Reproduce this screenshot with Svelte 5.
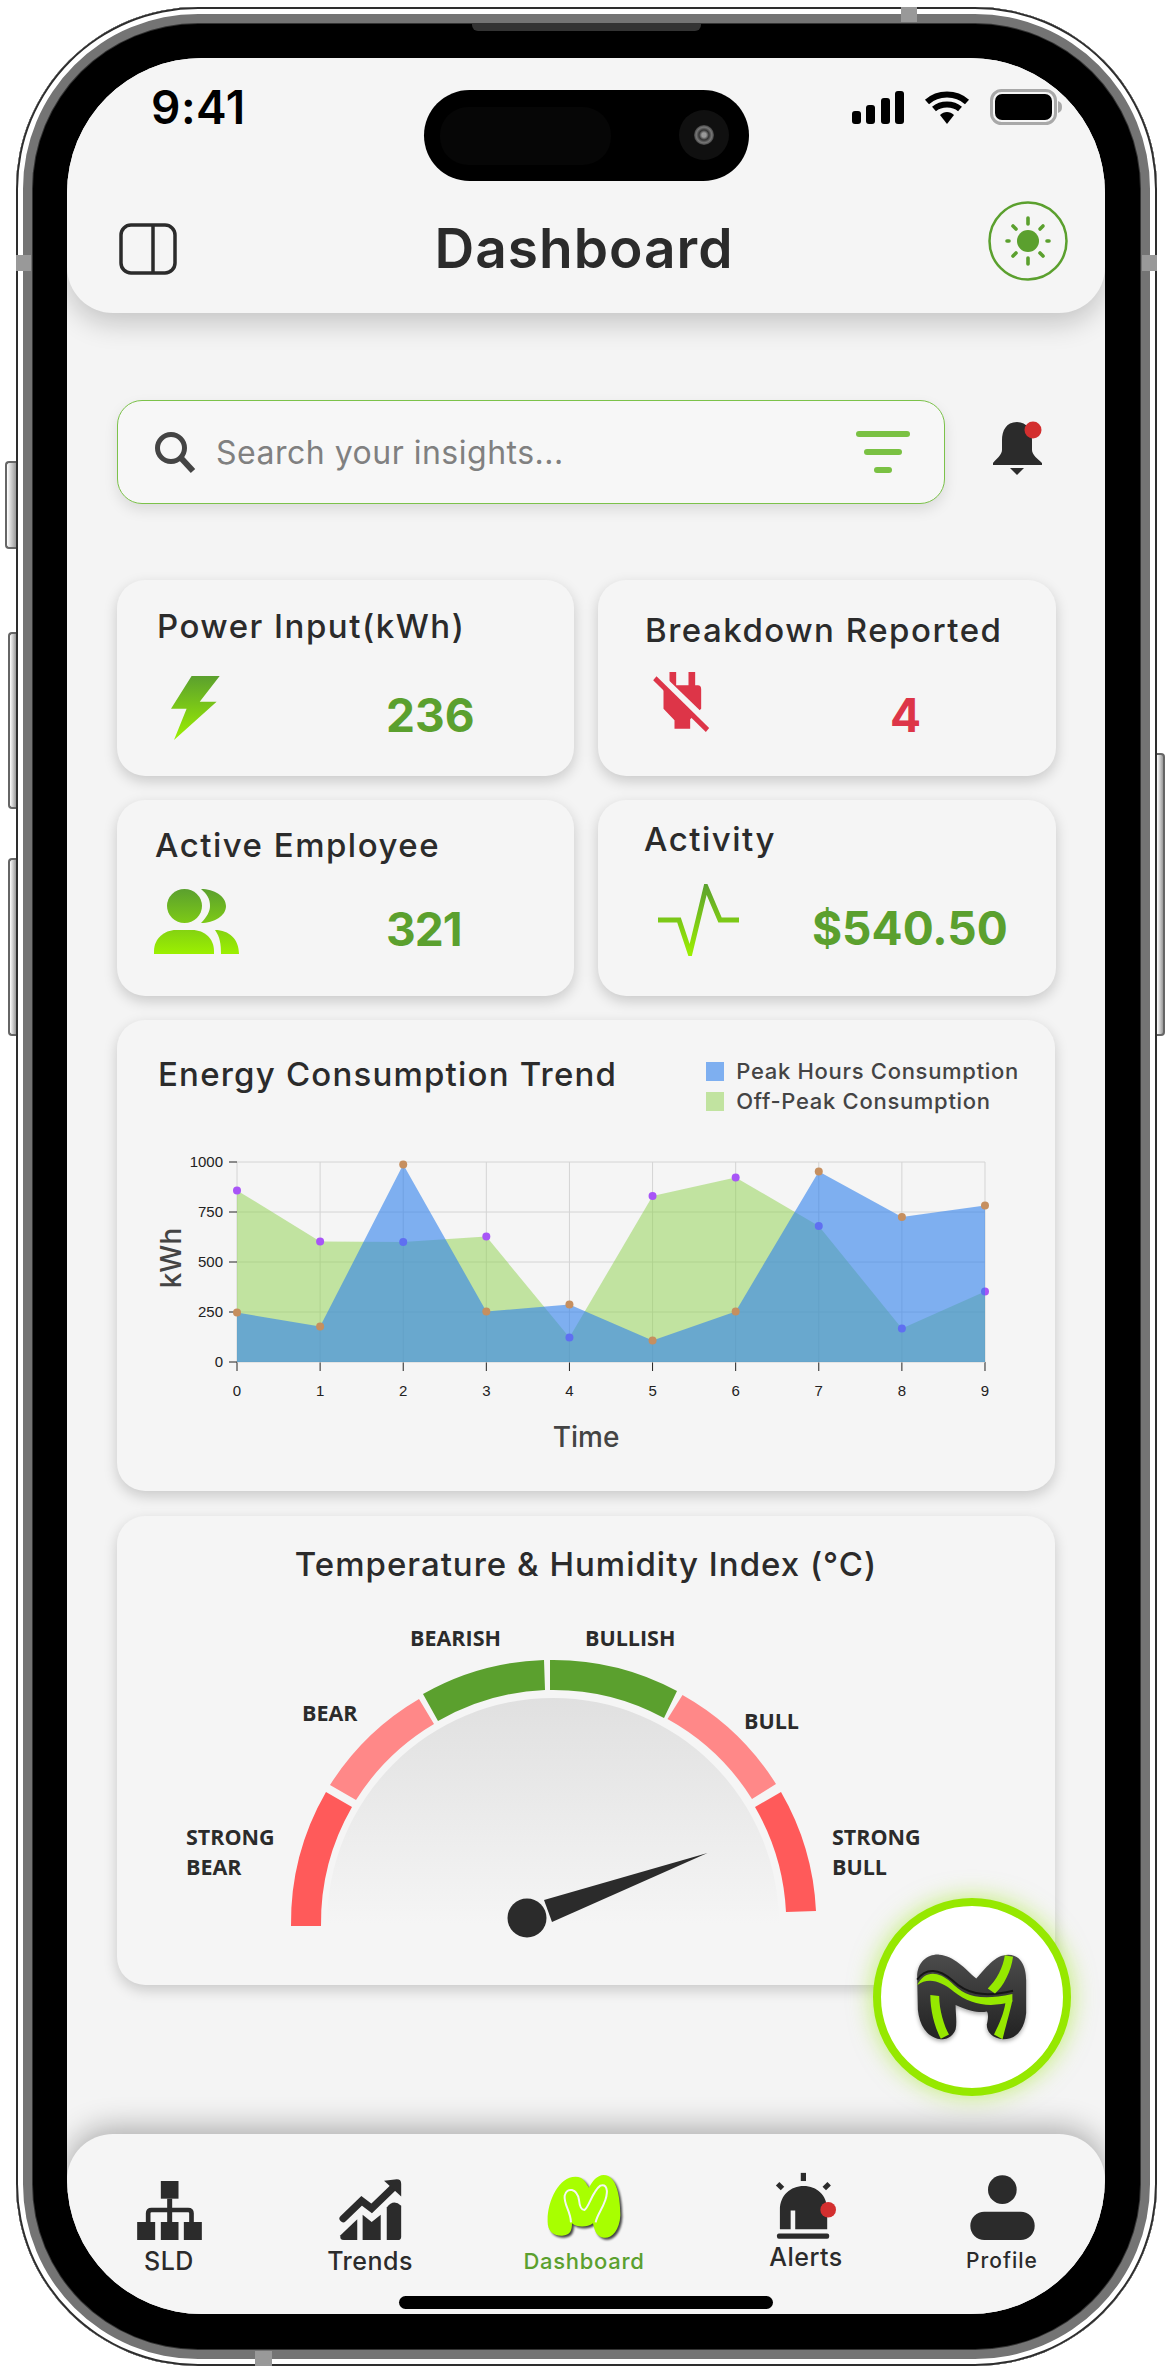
<script>
  const xAt = (i) => 236 + i * 83.11;
  const yAt = (v) => 1362 - v * 0.2;

  const offPeak = [858, 603, 600, 627, 122, 830, 923, 680, 167, 353];
  const peak = [247, 177, 987, 253, 287, 108, 253, 953, 725, 783];
  const ticksY = [0, 250, 500, 750, 1000];
  const ticksX = [0, 1, 2, 3, 4, 5, 6, 7, 8, 9];

  const area = (list) =>
    `M236,1362 ` + list.map((v, i) => `L${xAt(i)},${yAt(v)}`).join(' ') + ` L${xAt(9)},1362 Z`;

  const segments = [
    { d: 'M291,1927 A262,262 0 0 1 326,1793 L352,1808 A232,232 0 0 0 321,1927 Z', fill: '#ff5a5a' },
    { d: 'M330,1786 A262,262 0 0 1 419,1700 L434,1725 A232,232 0 0 0 356,1801 Z', fill: '#ff8888' },
    { d: 'M423,1695 A262,262 0 0 1 544,1661 L545,1691 A232,232 0 0 0 438,1722 Z', fill: '#5ba02e' },
    { d: 'M550,1661 A262,262 0 0 1 677,1692 L664,1719 A232,232 0 0 0 550,1691 Z', fill: '#5ba02e' },
    { d: 'M682.5,1696 A262,262 0 0 1 776,1785 L752,1800 A232,232 0 0 0 667.5,1720 Z', fill: '#ff8888' },
    { d: 'M781,1793 A262,262 0 0 1 816,1912 L786,1913 A232,232 0 0 0 755,1808 Z', fill: '#ff5a5a' }
  ];

  const gaugeLabels = [
    { text: 'BEARISH', x: 410, y: 1647 },
    { text: 'BULLISH', x: 585, y: 1647 },
    { text: 'BEAR', x: 302, y: 1722 },
    { text: 'BULL', x: 744, y: 1730 },
    { text: 'STRONG', x: 186, y: 1846 },
    { text: 'BEAR', x: 186, y: 1876 },
    { text: 'STRONG', x: 832, y: 1846 },
    { text: 'BULL', x: 832, y: 1876 }
  ];
</script>

<div class="page">
  <div class="phone">
    <span class="side-btn mute"></span>
    <span class="side-btn vol-up"></span>
    <span class="side-btn vol-down"></span>
    <span class="side-btn power"></span>
    <span class="speaker"></span>
    <span class="band band-top"></span>
    <span class="band band-bottom"></span>
    <span class="band band-left"></span>
    <span class="band band-right"></span>

    <div class="screen">
      <div class="island">
        <span class="island-pill"></span>
        <span class="camera"><span class="lens"></span></span>
      </div>

      <header class="header">
        <div class="status">
          <span class="time">9:41</span>
          <div class="status-icons">
            <svg width="52" height="33" viewBox="0 0 52 33">
              <rect x="0" y="20" width="9" height="13" rx="3" />
              <rect x="14" y="14" width="9" height="19" rx="3" />
              <rect x="29" y="7" width="9" height="26" rx="3" />
              <rect x="43" y="0" width="9" height="33" rx="3" />
            </svg>
            <svg class="wifi" width="46" height="33" viewBox="0 0 46 33">
              <path d="M3,11 C14,1 32,1 43,11" fill="none" stroke="#000" stroke-width="6" />
              <path d="M10,18 C17,12 29,12 36,18" fill="none" stroke="#000" stroke-width="6" />
              <path d="M16,24 C20,20 26,20 30,24 L23,33 Z" />
            </svg>
            <svg class="battery" width="72" height="36" viewBox="0 0 72 36">
              <rect x="1.5" y="1.5" width="64" height="33" rx="10" fill="none" stroke="#a8a8a8" stroke-width="3" />
              <rect x="5" y="5" width="57" height="26" rx="7" />
              <path d="M68,12 C71,13 72,15 72,18 C72,21 71,23 68,24 Z" fill="#a8a8a8" />
            </svg>
          </div>
        </div>

        <div class="toolbar">
          <svg class="panel-icon" width="58" height="52" viewBox="0 0 58 52">
            <rect x="2" y="2" width="54" height="48" rx="10" fill="none" stroke="#2b2b2b" stroke-width="3.5" />
            <line x1="34" y1="2" x2="34" y2="50" stroke="#2b2b2b" stroke-width="3.5" />
          </svg>
          <h1>Dashboard</h1>
          <div class="theme">
            <svg width="80" height="80" viewBox="0 0 80 80">
              <circle cx="40" cy="40" r="38.5" fill="none" stroke="#5ba02e" stroke-width="2.5" />
              <circle cx="40" cy="40" r="11" fill="#5ba02e" />
              <g stroke="#5ba02e" stroke-width="3.6" stroke-linecap="round">
                <line x1="40" y1="17" x2="40" y2="23" />
                <line x1="40" y1="57" x2="40" y2="63" />
                <line x1="19" y1="40" x2="21" y2="40" />
                <line x1="59" y1="40" x2="61" y2="40" />
                <line x1="25" y1="25" x2="28" y2="28" />
                <line x1="55" y1="25" x2="52" y2="28" />
                <line x1="25" y1="55" x2="28" y2="52" />
                <line x1="55" y1="55" x2="52" y2="52" />
              </g>
            </svg>
          </div>
        </div>
      </header>

      <main class="main">
        <div class="search-row">
          <div class="search">
            <svg width="42" height="44" viewBox="0 0 42 44">
              <circle cx="17" cy="18" r="13.5" fill="none" stroke="#444" stroke-width="5" />
              <line x1="27" y1="28" x2="39" y2="41" stroke="#444" stroke-width="6" />
            </svg>
            <span class="placeholder">Search your insights...</span>
            <span class="filter"><i class="f1"></i><i class="f2"></i><i class="f3"></i></span>
          </div>
          <svg class="bell" width="49" height="53" viewBox="0 0 49 53">
            <path d="M24,0 C13,0 9,9 9,18 V28 C9,33 3,37 0,41 V43 H49 V41 C45,37 39,33 39,28 V18 C39,9 34,0 24,0 Z" fill="#2b2b2b" />
            <path d="M17,46 H31 L24,53 Z" fill="#2b2b2b" />
            <circle cx="40" cy="8" r="8.5" fill="#d32f2f" />
          </svg>
        </div>

        <section class="stats">
          <div class="card stat">
            <h3 class="t-power">Power Input(kWh)</h3>
            <svg class="i-bolt" width="49" height="64" viewBox="0 0 49 64">
              <defs>
                <linearGradient id="brandV" x1="0" y1="0" x2="0" y2="1">
                  <stop offset="0" stop-color="#5ba02e" />
                  <stop offset="1" stop-color="#9cf000" />
                </linearGradient>
              </defs>
              <path d="M20.6,0 L48.7,0 L28.7,25.7 L45.6,25.7 L3,64 L15.6,32.7 L0,32.7 Z" fill="url(#brandV)" />
            </svg>
            <strong class="v-power">236</strong>
          </div>

          <div class="card stat">
            <h3 class="t-break">Breakdown Reported</h3>
            <svg class="i-plug" width="57" height="60" viewBox="36 20 170 180">
              <path d="M85,20 H105 V60 H142 V20 H162 V60 H170 Q180,60 180,72 V130 L147,162 V190 H100 V165 L67,130 V60 H85 Z" fill="#dd3548" />
              <line x1="72" y1="50" x2="186" y2="160" stroke="#f5f5f5" stroke-width="22" />
              <path d="M36,45 L46,33 L204,188 L194,200 Z" fill="#dd3548" />
            </svg>
            <strong class="v-break">4</strong>
          </div>

          <div class="card stat">
            <h3 class="t-active">Active Employee</h3>
            <svg class="i-people" width="85" height="65" viewBox="0 0 85 65">
              <defs>
                <linearGradient id="brandP" gradientUnits="userSpaceOnUse" x1="0" y1="0" x2="0" y2="65">
                  <stop offset="0" stop-color="#5ba02e" />
                  <stop offset="1" stop-color="#9cf000" />
                </linearGradient>
              </defs>
              <ellipse cx="30.5" cy="17" rx="17.5" ry="17" fill="url(#brandP)" />
              <path d="M47,0 C60,0 72,7 72,17 C72,27 60,34 47,34 C53,28 56,22 56,17 C56,10 53,5 47,0 Z" fill="url(#brandP)" />
              <path d="M0,65 V62 C0,50 10,41 22,41 H38 C51,41 60,50 60,62 V65 Z" fill="url(#brandP)" />
              <path d="M61,41 C75,41 85,50 85,65 H67 C67,55 66,48 61,41 Z" fill="url(#brandP)" />
            </svg>
            <strong class="v-active">321</strong>
          </div>

          <div class="card stat">
            <h3 class="t-activity">Activity</h3>
            <svg class="i-pulse" width="81" height="72" viewBox="0 0 81 72">
              <defs>
                <linearGradient id="brandL" gradientUnits="userSpaceOnUse" x1="0" y1="0" x2="0" y2="72">
                  <stop offset="0" stop-color="#5ba02e" />
                  <stop offset="1" stop-color="#9cf000" />
                </linearGradient>
              </defs>
              <path d="M0,36 H21 L32,69 L48,3 L62,36 H81" fill="none" stroke="url(#brandL)" stroke-width="5" />
            </svg>
            <strong class="v-activity">$540.50</strong>
          </div>
        </section>

        <section class="card trend">
          <div class="trend-head">
            <h3>Energy Consumption Trend</h3>
            <ul class="legend">
              <li><i class="sw-peak"></i>Peak Hours Consumption</li>
              <li><i class="sw-off"></i>Off-Peak Consumption</li>
            </ul>
          </div>
          <svg class="plot" width="860" height="310" viewBox="150 1150 860 310">
            {#each ticksX as t}
              <line x1={xAt(t)} x2={xAt(t)} y1="1162" y2="1362" stroke="#d4d4d4" />
              <line x1={xAt(t)} x2={xAt(t)} y1="1362" y2="1371" stroke="#222" />
              <text class="tick" x={xAt(t)} y="1396" text-anchor="middle">{t}</text>
            {/each}
            {#each ticksY as t}
              <line x1="236" x2="984" y1={yAt(t)} y2={yAt(t)} stroke="#d4d4d4" />
              <line x1="228" x2="236" y1={yAt(t)} y2={yAt(t)} stroke="#222" />
              <text class="tick" x="222" y={yAt(t) + 5} text-anchor="end">{t}</text>
            {/each}

            <path d={area(offPeak)} fill="#8dd14b" fill-opacity="0.5" />
            {#each offPeak as v, i}
              <circle cx={xAt(i)} cy={yAt(v)} r="4" fill="#a855f7" />
            {/each}
            <path d={area(peak)} fill="#2f80ed" fill-opacity="0.6" />
            {#each peak as v, i}
              <circle cx={xAt(i)} cy={yAt(v)} r="4" fill="#c68f5f" />
            {/each}

            <text class="axis" x="585" y="1447" text-anchor="middle">Time</text>
            <text class="axis" x="0" y="0" text-anchor="middle" transform="translate(180,1258) rotate(-90)">kWh</text>
          </svg>
        </section>

        <section class="card gauge">
          <h3>Temperature &amp; Humidity Index (°C)</h3>
          <svg class="dial" width="770" height="330" viewBox="170 1620 770 330">
            <defs>
              <linearGradient id="disk" x1="0" y1="0" x2="0" y2="1">
                <stop offset="0" stop-color="#e0e0e0" />
                <stop offset="1" stop-color="#f5f5f5" />
              </linearGradient>
            </defs>
            <path d="M327,1925 A226,226 0 0 1 779,1925 Z" fill="url(#disk)" />
            {#each segments as s}
              <path d={s.d} fill={s.fill} />
            {/each}
            {#each gaugeLabels as l}
              <text class="g-label" x={l.x} y={l.y}>{l.text}</text>
            {/each}
            <path d="M707.5,1854 L544,1901 L552,1923 Z" fill="#2b2b2b" />
            <circle cx="527" cy="1919" r="19.5" fill="#2b2b2b" />
          </svg>
        </section>
      </main>

      <button class="fab" aria-label="Assistant">
        <svg width="112" height="87" viewBox="225 250 340 265">
          <defs>
            <linearGradient id="logoDark" x1="0" y1="0" x2="0" y2="1">
              <stop offset="0" stop-color="#4c4c4c" />
              <stop offset="1" stop-color="#222" />
            </linearGradient>
          </defs>
          <path d="M300,510 C260,505 235,470 230,420 L228,320 C228,275 260,250 295,252 C340,255 375,295 408,325 C435,295 465,252 505,252 C545,252 560,290 560,330 L560,430 C555,480 530,510 490,510 C460,508 440,490 440,465 C445,445 445,430 440,425 C420,430 390,425 345,405 C345,430 350,460 345,480 C335,505 315,510 300,510 Z" fill="url(#logoDark)" />
          <path d="M228,328 C255,290 295,295 335,330 C375,368 425,385 520,362" fill="none" stroke="#161616" stroke-width="6" />
          <path d="M228,345 C250,300 290,300 330,335 C370,375 410,395 518,372 L518,395 C450,415 390,405 340,365 C300,330 260,320 228,345 Z" fill="#96e800" />
          <path d="M268,375 L295,378 C295,420 310,470 325,495 L300,508 C280,470 268,420 268,375 Z" fill="#96e800" />
          <path d="M495,254 L520,258 C515,300 490,350 465,370 L443,355 C470,330 490,290 495,254 Z" fill="#96e800" />
          <path d="M518,392 C510,430 495,480 488,510 L462,495 C480,460 492,430 497,398 Z" fill="#96e800" />
        </svg>
      </button>

      <nav class="nav">
        <div class="nav-grid">
          <div class="nav-item">
            <div class="nav-icon">
              <svg width="65" height="59" viewBox="22 45 194 177">
                <rect x="93" y="45" width="53" height="53" />
                <rect x="112" y="98" width="15" height="72" />
                <path d="M55,170 V142 Q55,132 65,132 H175 Q185,132 185,142 V170" fill="none" stroke="#2b2b2b" stroke-width="14" />
                <rect x="22" y="168" width="54" height="54" />
                <rect x="93" y="168" width="53" height="54" />
                <rect x="162" y="168" width="54" height="54" />
              </svg>
            </div>
            <span class="lbl lbl-sld">SLD</span>
          </div>
          <div class="nav-item">
            <div class="nav-icon">
              <svg width="63" height="61" viewBox="628 40 187 182">
                <path d="M640,158 L695,105 L725,128 L790,65" fill="none" stroke="#2b2b2b" stroke-width="22" stroke-linecap="round" />
                <path d="M762,45 L800,41 Q813,41 813,54 L813,92 Z" />
                <path d="M632,208 L682,160 V222 H642 Q628,222 632,208 Z" />
                <path d="M698,222 V147 L725,168 L752,147 V222 Z" />
                <path d="M770,222 V125 Q790,98 813,120 V212 Q813,222 803,222 Z" />
              </svg>
            </div>
            <span class="lbl lbl-trends">Trends</span>
          </div>
          <div class="nav-item">
            <div class="nav-icon">
              <svg class="m-icon" width="74" height="65" viewBox="80 30 222 195">
                <path d="M82,170 C80,110 115,35 165,35 C190,35 197,55 206,68 C215,50 230,30 250,30 C290,30 300,100 300,150 C298,200 270,222 250,218 C225,215 222,190 218,175 C200,188 170,188 155,175 C155,195 150,212 125,212 C95,212 82,195 82,170 Z" fill="#a8ff00" />
                <path d="M152,172 C150,135 130,120 133,92 C140,65 170,70 176,105 C178,125 185,135 192,135 C205,130 215,80 240,62 C258,55 265,75 255,105 C245,135 230,150 226,172" fill="none" stroke="#f5f5f5" stroke-width="6" />
              </svg>
            </div>
            <span class="lbl lbl-dash">Dashboard</span>
          </div>
          <div class="nav-item">
            <div class="nav-icon">
              <svg width="62" height="68" viewBox="52 22 190 203">
                <path fill-rule="evenodd" d="M67,195 V135 C67,90 100,62 140,62 C180,62 212,90 212,135 V195 H114 V137 H100 V195 Z" />
                <rect x="58" y="208" width="160" height="16" rx="6" />
                <rect x="131" y="22" width="16" height="25" />
                <path d="M60,55 L75,70" stroke="#2b2b2b" stroke-width="15" />
                <path d="M218,55 L203,70" stroke="#2b2b2b" stroke-width="15" />
                <circle cx="215" cy="135" r="24" fill="#d32f2f" />
              </svg>
            </div>
            <span class="lbl lbl-alerts">Alerts</span>
          </div>
          <div class="nav-item">
            <div class="nav-icon">
              <svg width="65" height="65" viewBox="627 28 193 195">
                <circle cx="723" cy="72" r="43" />
                <rect x="627" y="138" width="193" height="85" rx="42" />
              </svg>
            </div>
            <span class="lbl lbl-profile">Profile</span>
          </div>
        </div>
        <span class="home"></span>
      </nav>
    </div>
  </div>
</div>

<style>
  :global(body) {
    margin: 0;
    background: #fff;
  }

  .page {
    width: 1171px;
    height: 2372px;
    padding: 7px 14px 6px 16px;
    box-sizing: border-box;
    font-family: Inter, "Noto Sans", sans-serif;
    color: #2b2b2b;
  }

  .phone {
    position: relative;
    height: 100%;
    box-sizing: border-box;
    padding: 51px 52px 52px 51px;
    border-radius: 182px;
    background: #000;
    box-shadow:
      inset 0 0 0 2px #2e2e2e,
      inset 0 0 0 7px #fff,
      inset 0 0 0 16px #747474,
      inset 0 0 0 17px #333;
  }

  .side-btn {
    position: absolute;
    border: 2px solid #666;
    border-right: 0;
    background: linear-gradient(90deg, #fff, #999);
    border-radius: 4px 0 0 4px;
    box-sizing: border-box;
  }
  .mute { left: -11px; top: 454px; width: 11px; height: 88px; }
  .vol-up { left: -8px; top: 625px; width: 8px; height: 177px; }
  .vol-down { left: -8px; top: 851px; width: 8px; height: 178px; }
  .power {
    right: -8px;
    top: 746px;
    width: 8px;
    height: 283px;
    border: 2px solid #666;
    border-left: 0;
    border-radius: 0 4px 4px 0;
  }
  .speaker {
    position: absolute;
    top: 16px;
    left: 456px;
    width: 229px;
    height: 8px;
    background: #333;
    border-radius: 0 0 6px 6px;
  }
  .band {
    position: absolute;
    background: #999;
  }
  .band-top { top: 0; left: 885px; width: 16px; height: 15px; }
  .band-bottom { bottom: 0; left: 239px; width: 17px; height: 15px; }
  .band-left { left: 0; top: 248px; width: 15px; height: 16px; }
  .band-right { right: 0; top: 248px; width: 15px; height: 16px; }

  .screen {
    position: relative;
    height: 100%;
    display: flex;
    flex-direction: column;
    overflow: hidden;
    border-radius: 135px;
    background: #f4f4f4;
  }

  .island {
    position: absolute;
    z-index: 3;
    left: 357px;
    top: 32px;
    width: 325px;
    height: 91px;
    border-radius: 46px;
    background: #000;
  }
  .island-pill {
    position: absolute;
    left: 16px;
    top: 17px;
    width: 171px;
    height: 58px;
    border-radius: 28px;
    background: #060606;
  }
  .camera {
    position: absolute;
    left: 255px;
    top: 20px;
    width: 50px;
    height: 50px;
    border-radius: 50%;
    background: #101010;
    display: flex;
    align-items: center;
    justify-content: center;
  }
  .lens {
    width: 20px;
    height: 20px;
    border-radius: 50%;
    background: radial-gradient(circle, #999 0 15%, #333 35%, #777 55%, #222 80%);
  }

  .header {
    position: relative;
    z-index: 2;
    height: 255px;
    flex: none;
    box-sizing: border-box;
    border-radius: 0 0 46px 46px;
    background: #f5f5f5;
    box-shadow: 0 10px 28px rgba(0, 0, 0, 0.2);
  }
  .status {
    display: flex;
    justify-content: space-between;
    align-items: center;
    height: 46px;
    padding: 26px 43px 0 84px;
  }
  .time {
    font-size: 46px;
    font-weight: 600;
    color: #000;
    letter-spacing: 0.5px;
  }
  .status-icons {
    display: flex;
    align-items: center;
    gap: 20px;
  }
  .toolbar {
    display: grid;
    grid-template-columns: 1fr auto 1fr;
    align-items: center;
    padding: 71px 52px 0 52px;
  }
  .panel-icon {
    display: block;
    margin-top: 16px;
  }
  .toolbar h1 {
    margin: 14px 4px 0 0;
    font-size: 55px;
    line-height: 60px;
    font-weight: 600;
    letter-spacing: 1px;
  }
  .theme {
    justify-self: end;
    display: flex;
    margin-right: -15px;
  }

  .main {
    flex: 1;
    padding: 87px 50px 0;
    min-height: 0;
  }

  .search-row {
    display: flex;
    align-items: flex-start;
  }
  .search {
    width: 828px;
    height: 104px;
    box-sizing: border-box;
    display: flex;
    align-items: center;
    padding: 0 34px 0 36px;
    border: 1.5px solid #7cc24a;
    border-radius: 25px;
    background: #f7f7f7;
    box-shadow: 0 6px 14px rgba(0, 0, 0, 0.1);
  }
  .placeholder {
    margin-left: 20px;
    font-size: 32px;
    letter-spacing: 0.5px;
    color: #808080;
  }
  .filter {
    margin-left: auto;
    display: flex;
    flex-direction: column;
    align-items: center;
    gap: 12px;
  }
  .filter i {
    display: block;
    height: 6px;
    border-radius: 3px;
    background: #7ac143;
  }
  .f1 { width: 54px; }
  .f2 { width: 38px; }
  .f3 { width: 18px; }
  .bell {
    margin: 22px 0 0 48px;
    overflow: visible;
  }

  .card {
    border-radius: 28px;
    background: #f5f5f5;
    box-shadow: 0 5px 14px rgba(0, 0, 0, 0.18);
  }
  .stats {
    display: grid;
    grid-template-columns: 457px 458px;
    grid-auto-rows: 196px;
    gap: 24px;
    margin-top: 76px;
  }
  .stat {
    position: relative;
  }
  /* stat contents sit at their own spots, the four cards in the source differ */
  .stat h3,
  .stat svg,
  .stat strong {
    position: absolute;
    margin: 0;
  }
  .stat h3 {
    font-size: 33px;
    line-height: 36px;
    font-weight: 500;
    letter-spacing: 1.5px;
    white-space: nowrap;
  }
  .stat strong {
    font-size: 46px;
    line-height: 54px;
    font-weight: 700;
    color: #5ba02e;
  }
  .t-power { left: 40px; top: 28px; }
  .t-break { left: 47px; top: 32px; }
  .t-active { left: 38px; top: 27px; letter-spacing: 1.1px; }
  .t-activity { left: 46px; top: 21px; letter-spacing: 2.2px; }
  .i-bolt { left: 54px; top: 96px; }
  .i-plug { left: 55px; top: 92px; }
  .i-people { left: 37px; top: 89px; }
  .i-pulse { left: 60px; top: 84px; }
  .v-power { left: 269px; top: 108px; }
  .v-break { left: 292px; top: 108px; color: #dd3548 !important; }
  .v-active { left: 269px; top: 102px; letter-spacing: -1px; }
  .v-activity { left: 214px; top: 101px; }

  .trend {
    margin-top: 24px;
    height: 471px;
    box-sizing: border-box;
    padding: 36px 0 0 41px;
  }
  .trend-head {
    display: flex;
    align-items: flex-start;
    height: 56px;
    padding-right: 36px;
  }
  .trend-head h3 {
    margin: 0;
    font-size: 33px;
    line-height: 36px;
    font-weight: 500;
    letter-spacing: 1.2px;
    white-space: nowrap;
  }
  .legend {
    list-style: none;
    margin: 0 0 0 auto;
    padding: 0;
    font-size: 22px;
    font-weight: 500;
    letter-spacing: 0.7px;
    color: #444;
  }
  .legend li {
    display: flex;
    align-items: center;
    height: 30px;
    white-space: nowrap;
  }
  .legend i {
    width: 18px;
    height: 19px;
    margin-right: 12px;
  }
  .sw-peak { background: #7eaff0; }
  .sw-off { background: #c1e3a0; }
  .plot {
    display: block;
    margin: 38px 0 0 -7px;
  }
  .tick {
    font-family: "Liberation Sans", sans-serif;
    font-size: 15px;
    fill: #222;
  }
  .axis {
    font-size: 28px;
    font-weight: 500;
    fill: #444;
  }

  .gauge {
    margin-top: 25px;
    height: 469px;
    box-sizing: border-box;
    padding-top: 28px;
  }
  .gauge h3 {
    margin: 0;
    text-align: center;
    font-size: 33px;
    line-height: 40px;
    font-weight: 500;
    letter-spacing: 1px;
    white-space: nowrap;
  }
  .dial {
    display: block;
    margin: 35px 0 0 53px;
  }
  .g-label {
    font-family: "Open Sans", sans-serif;
    font-size: 21.5px;
    font-weight: 700;
    fill: #2b2b2b;
  }

  .fab {
    position: absolute;
    z-index: 4;
    left: 806px;
    top: 1840px;
    width: 198px;
    height: 198px;
    padding: 0;
    display: flex;
    align-items: center;
    justify-content: center;
    border: 8px solid #96e800;
    border-radius: 50%;
    background: #fff;
    box-shadow: 0 0 24px rgba(150, 232, 0, 0.55);
  }
  .fab svg {
    filter: drop-shadow(0 2px 2px rgba(0, 0, 0, 0.35));
  }

  .nav {
    position: relative;
    z-index: 2;
    height: 180px;
    flex: none;
    box-sizing: border-box;
    padding-top: 38px;
    display: flex;
    flex-direction: column;
    align-items: center;
    border-radius: 46px 46px 0 0;
    background: #f5f5f5;
    box-shadow: 0 -6px 30px rgba(0, 0, 0, 0.3);
  }
  .nav-grid {
    align-self: stretch;
    display: grid;
    grid-template-columns: 204px 198px 230px 214px 178px;
    height: 105px;
  }
  .nav-item {
    display: flex;
    flex-direction: column;
    align-items: center;
  }
  .nav-icon {
    height: 68px;
    display: flex;
    align-items: flex-end;
    color: #2b2b2b;
  }
  .nav-icon svg {
    display: block;
    fill: #2b2b2b;
  }
  .m-icon {
    filter: drop-shadow(2px 2px 1px #444);
  }
  .lbl {
    margin-top: 6px;
    font-size: 25px;
    line-height: 30px;
    font-weight: 500;
    letter-spacing: 0.5px;
  }
  .lbl-dash {
    color: #5ba02e;
    font-size: 22px;
    letter-spacing: 0.7px;
  }
  .lbl-alerts {
    margin-top: 2px;
  }
  .lbl-profile {
    font-size: 21px;
    letter-spacing: 1px;
  }
  .home {
    width: 374px;
    height: 13px;
    margin-top: 19px;
    border-radius: 7px;
    background: #000;
  }
</style>
